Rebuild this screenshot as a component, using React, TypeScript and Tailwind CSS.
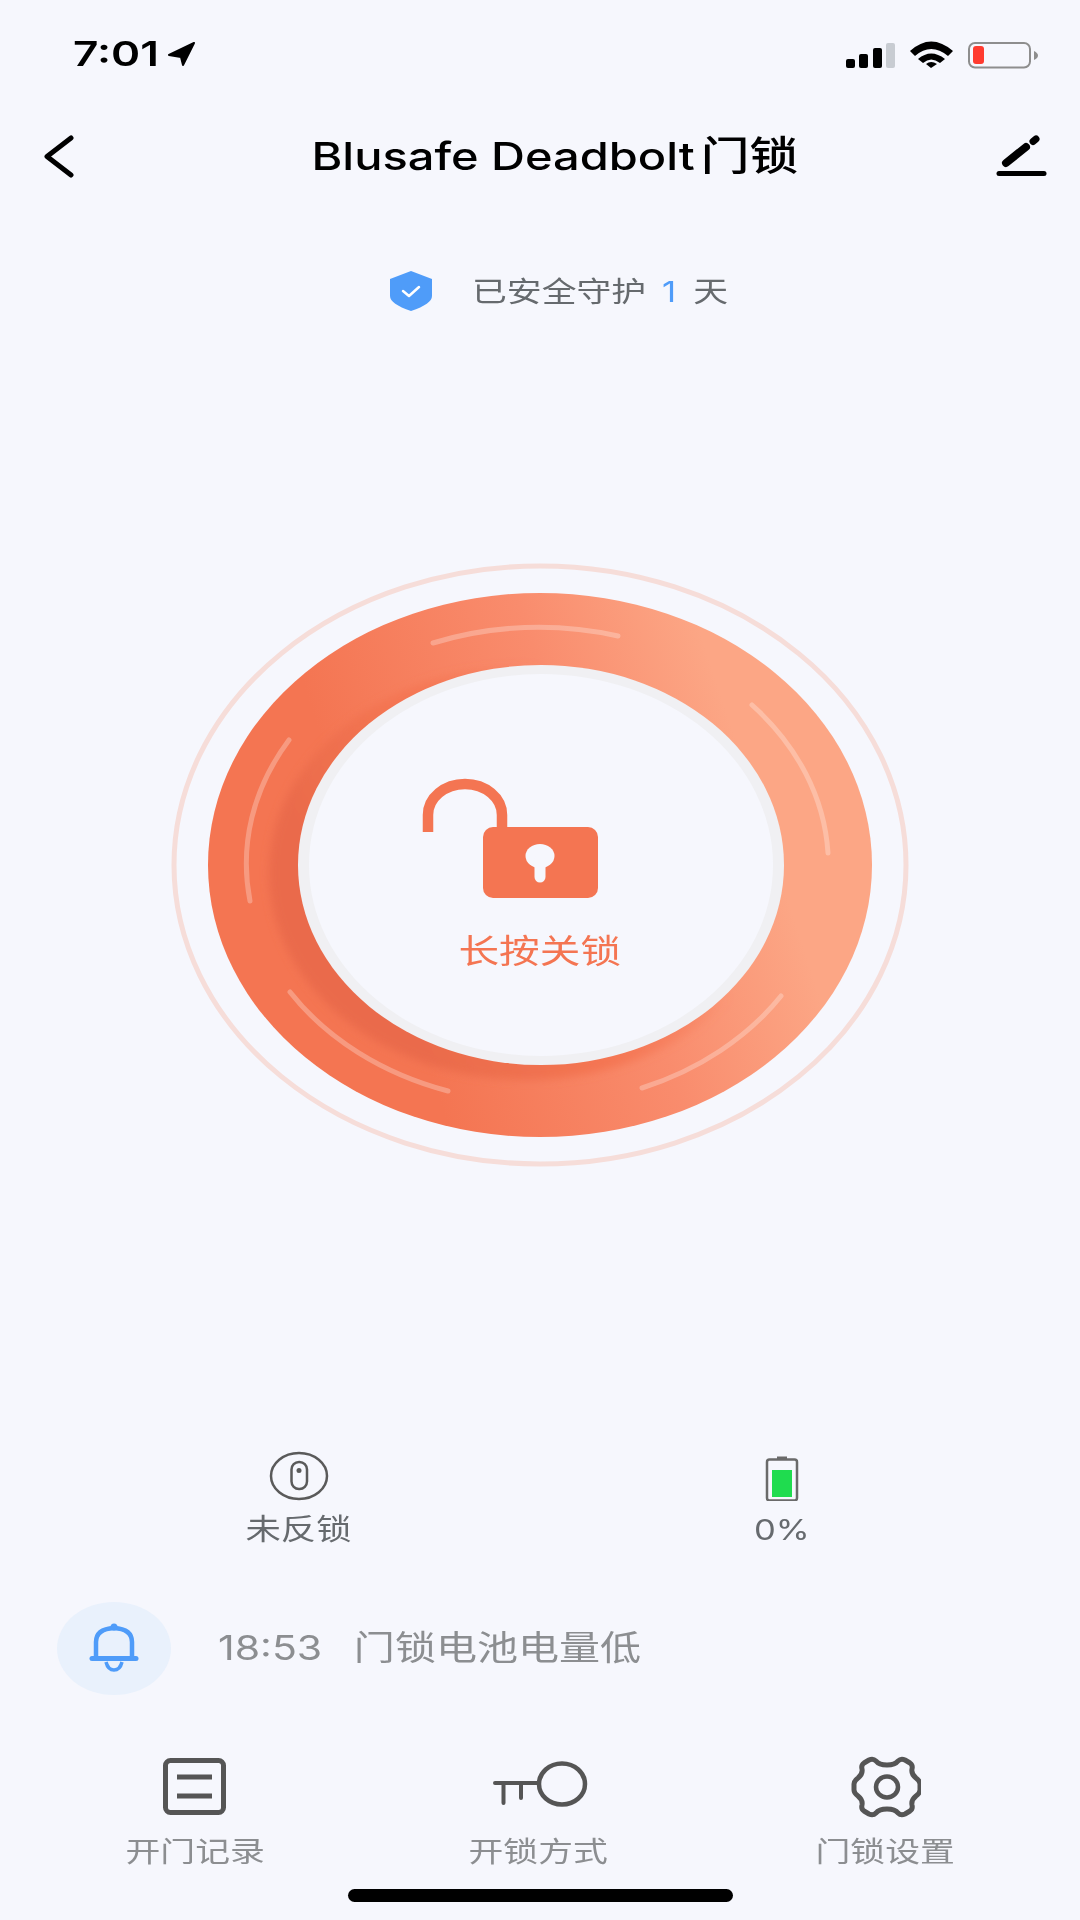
const font = { fontFamily: '"Inter", "Noto Sans CJK SC", sans-serif' }

function StatusBar() {
  return (
    <div className="relative flex h-[100px] items-start justify-between pl-[73px] pr-[41px] pt-[41px]">
      <div className="flex items-start">
        <span className="inline-block origin-left scale-x-[1.3] text-[34px] leading-[26px] font-semibold text-black">7:01</span>
        <svg viewBox="169 42 30 26" className="ml-[27px] h-[26px] w-[30px]">
          <path d="M197 44 L172 56 L184 58 L186 66 Z" fill="#000" stroke="#000" strokeWidth="2" strokeLinejoin="round" />
        </svg>
      </div>
      <svg viewBox="846 40 194 28" className="h-[28px] w-[194px]">
        <rect x="847" y="58" width="9" height="9" rx="2" fill="#000" />
        <rect x="860" y="53" width="9" height="14" rx="2" fill="#000" />
        <rect x="874" y="47" width="9" height="20" rx="2" fill="#000" />
        <rect x="887" y="42" width="9" height="25" rx="2" fill="#c8ccd2" />
        <path d="M911 50 Q932 31 954 50 L949 55 Q932 41 916 55 Z" fill="#000" />
        <path d="M919 58 Q932 47 946 58 L941 62 Q932 55 924 62 Z" fill="#000" />
        <path d="M927 63 Q932 59 938 63 L932 67 Z" fill="#000" />
        <rect x="970" y="42" width="61" height="24.5" rx="6" fill="none" stroke="#8e8e8e" strokeWidth="2" />
        <rect x="974" y="45" width="11" height="18" rx="3" fill="#ff3b30" />
        <path d="M1035 50 Q1039 52 1039 54.5 Q1039 57 1035 59 Z" fill="#8e8e8e" />
      </svg>
    </div>
  )
}

function Header() {
  return (
    <div className="flex h-[112px] items-center justify-between pl-[44px] pr-[32px]">
      <svg viewBox="44 134 30 44" className="h-[44px] w-[30px]">
        <path d="M71 138 L47 156.5 L71 175" fill="none" stroke="#000" strokeWidth="5" strokeLinecap="round" strokeLinejoin="round" />
      </svg>
      <span className="ml-[40px] inline-block scale-x-[1.218] text-[38.6px] leading-[44px] font-medium whitespace-nowrap text-black">
        Blusafe Deadbolt<span className="ml-[5px] text-[40px]">门锁</span>
      </span>
      <svg viewBox="996 134 52 44" className="h-[44px] w-[52px]">
        <path d="M1006 163 L1026 147" stroke="#000" strokeWidth="8" strokeLinecap="round" />
        <path d="M1033 141.5 L1036 139" stroke="#000" strokeWidth="7" strokeLinecap="round" />
        <path d="M999 173.5 H1044" stroke="#000" strokeWidth="5" strokeLinecap="round" />
      </svg>
    </div>
  )
}

function SafeDays() {
  return (
    <div className="flex h-[158px] items-center pl-[390px]">
      <svg viewBox="390 272 42 40" className="h-[40px] w-[42px]">
        <path d="M411 272 L432 280 V297 Q432 305 411 312 Q390 305 390 297 V280 Z" fill="#4f9cf9" />
        <path d="M403 292 L409 297 L419 288" fill="none" stroke="#fff" strokeWidth="2.5" strokeLinecap="round" strokeLinejoin="round" />
      </svg>
      <span className="mt-[2px] ml-[40px] inline-block origin-left scale-x-[1.218] text-[28.6px] leading-[34px] whitespace-pre text-[#666a6e]">
        已安全守护 <span className="mr-[6px] ml-[5px] text-[#4f9cf9]">1</span> 天
      </span>
    </div>
  )
}

function LockRing() {
  return (
    <div className="relative flex h-[990px] items-center justify-center">
      <svg viewBox="170 560 740 610" className="h-[610px] w-[740px]">
        <defs>
          <linearGradient id="ring" gradientUnits="userSpaceOnUse" x1="280" y1="930" x2="800" y2="760">
            <stop offset="0.18" stopColor="#f47552" />
            <stop offset="0.6" stopColor="#f98c6d" />
            <stop offset="0.9" stopColor="#fca685" />
          </linearGradient>
          <linearGradient id="ringShadow" gradientUnits="userSpaceOnUse" x1="300" y1="980" x2="620" y2="800">
            <stop offset="0.2" stopColor="#ea6b4b" />
            <stop offset="0.6" stopColor="#f47552" />
            <stop offset="1" stopColor="#f47552" stopOpacity="0" />
          </linearGradient>
          <filter id="soft" x="-10%" y="-10%" width="120%" height="120%">
            <feGaussianBlur stdDeviation="4" />
          </filter>
        </defs>
        <ellipse cx="540" cy="865" rx="366" ry="299" fill="none" stroke="#f6ddd9" strokeWidth="5" />
        <ellipse cx="540" cy="865" rx="332" ry="272" fill="url(#ring)" />
        <ellipse cx="526" cy="873" rx="257" ry="207" fill="url(#ringShadow)" filter="url(#soft)" />
        <ellipse cx="541" cy="865" rx="243" ry="200" fill="#f0f0f3" />
        <ellipse cx="541" cy="865" rx="232" ry="191" fill="#f6f7fd" />
        <g fill="none" stroke="#fff" strokeOpacity="0.27" strokeWidth="5" strokeLinecap="round">
          <path d="M433 643 A296 239 0 0 1 618 636" />
          <path d="M752 705 A296 239 0 0 1 828 853" />
          <path d="M781 996 A296 239 0 0 1 642 1088" />
          <path d="M448 1091 A296 239 0 0 1 290 992" />
          <path d="M250 901 A296 239 0 0 1 289 740" />
        </g>
        <path d="M428 832 V815 A37 31 0 0 1 502 815 V830" fill="none" stroke="#f47552" strokeWidth="10.5" />
        <rect x="483" y="827" width="115" height="71" rx="10" fill="#f47552" />
        <ellipse cx="540" cy="856" rx="14.5" ry="12" fill="#f6f7fd" />
        <path d="M540 860 V877" stroke="#f6f7fd" strokeWidth="11" strokeLinecap="round" />
      </svg>
      <span className="absolute top-[561px] left-0 w-full text-center">
        <span className="inline-block scale-x-[1.218] text-[33.4px] leading-[40px] text-[#f47552]">长按关锁</span>
      </span>
    </div>
  )
}

function DeviceStatus() {
  return (
    <div className="grid h-[220px] grid-cols-2 px-[57px] pt-[91px]">
      <div className="flex flex-col items-center">
        <svg viewBox="268 1450 60 50" className="h-[50px] w-[60px]">
          <ellipse cx="298" cy="1475" rx="28" ry="23" fill="none" stroke="#5a5a5a" strokeWidth="2.5" />
          <rect x="290.5" y="1461" width="15.5" height="27" rx="7.5" fill="none" stroke="#5a5a5a" strokeWidth="2.5" />
          <ellipse cx="298" cy="1469.5" rx="2.5" ry="2.5" fill="#5a5a5a" />
        </svg>
        <span className="mt-[12px] inline-block scale-x-[1.218] text-[29px] leading-[34px] text-[#666a6e]">未反锁</span>
      </div>
      <div className="flex flex-col items-center">
        <svg viewBox="762 1450 40 50" className="h-[50px] w-[40px]">
          <rect x="767" y="1458.5" width="30" height="41" rx="2.5" fill="none" stroke="#6a6a6a" strokeWidth="2.5" />
          <rect x="777" y="1455.5" width="10" height="3.5" fill="#6a6a6a" />
          <rect x="772" y="1469" width="20" height="27" fill="#1fdc4f" />
        </svg>
        <span className="mt-[12px] inline-block scale-x-[1.218] text-[28.4px] leading-[34px] text-[#666a6e]">0%</span>
      </div>
    </div>
  )
}

function LastEvent() {
  return (
    <div className="flex h-[136px] items-center pl-[57px]">
      <div className="flex h-[93px] w-[114px] items-center justify-center rounded-[50%] bg-[#e9f1fc]">
        <svg viewBox="88 1622 52 52" className="h-[52px] w-[52px]">
          <path d="M96 1657 V1642 Q96 1629 114 1628 Q132 1629 132 1642 V1657" fill="none" stroke="#4f9cf9" strokeWidth="4.5" />
          <circle cx="114" cy="1627" r="3.5" fill="#4f9cf9" />
          <path d="M92 1658.5 H136" stroke="#4f9cf9" strokeWidth="5" strokeLinecap="round" />
          <path d="M106 1662 Q108 1670 114 1670 Q120 1670 122 1662" fill="none" stroke="#4f9cf9" strokeWidth="3.5" />
        </svg>
      </div>
      <span className="ml-[47px] inline-block origin-left scale-x-[1.218] text-[33.7px] leading-[40px] whitespace-pre text-[#8c8e91]">
        18:53<span className="ml-[26px]">门锁电池电量低</span>
      </span>
    </div>
  )
}

const iconColor = '#555555'

function TabBar() {
  return (
    <div className="flex flex-1 justify-between px-[95px] pt-[40px]">
      <div className="flex w-[200px] flex-col items-center">
        <svg viewBox="160 1756 70 62" className="h-[62px] w-[70px]">
          <rect x="165.5" y="1760.5" width="58" height="52" rx="5" fill="none" stroke={iconColor} strokeWidth="5" />
          <path d="M177 1777 H212 M177 1796 H212" stroke={iconColor} strokeWidth="5" />
        </svg>
        <span className="mt-[17px] inline-block scale-x-[1.218] text-[28.6px] leading-[34px] text-[#8c8e91]">开门记录</span>
      </div>
      <div className="flex w-[200px] flex-col items-center">
        <svg viewBox="488 1756 100 62" className="h-[62px] w-[100px]">
          <ellipse cx="562" cy="1784" rx="23" ry="20.5" fill="none" stroke={iconColor} strokeWidth="4.5" />
          <path d="M495 1783 H539 M503.5 1783 V1803 M521 1783 V1798" fill="none" stroke={iconColor} strokeWidth="4" strokeLinecap="round" />
        </svg>
        <span className="mt-[17px] inline-block scale-x-[1.218] text-[28.6px] leading-[34px] text-[#8c8e91]">开锁方式</span>
      </div>
      <div className="ml-[4px] flex w-[200px] flex-col items-center">
        <svg viewBox="849 1756 72 62" className="h-[62px] w-[72px]">
          <g transform="translate(887 1787)">
            <path
              d="M0 -22 Q8 -22 11 -26 Q14 -29 18 -27 L23 -24 Q26 -22 25 -18 Q24 -13 29 -9 Q33 -6 33 -3 V3 Q33 6 29 9 Q24 13 25 18 Q26 22 23 24 L18 27 Q14 29 11 26 Q8 22 0 22 Q-8 22 -11 26 Q-14 29 -18 27 L-23 24 Q-26 22 -25 18 Q-24 13 -29 9 Q-33 6 -33 3 V-3 Q-33 -6 -29 -9 Q-24 -13 -25 -18 Q-26 -22 -23 -24 L-18 -27 Q-14 -29 -11 -26 Q-8 -22 0 -22 Z"
              fill="none"
              stroke={iconColor}
              strokeWidth="5"
              strokeLinejoin="round"
            />
            <ellipse cx="0" cy="0" rx="11" ry="10.5" fill="none" stroke={iconColor} strokeWidth="4.5" />
          </g>
        </svg>
        <span className="mt-[17px] inline-block scale-x-[1.218] text-[28.6px] leading-[34px] text-[#8c8e91]">门锁设置</span>
      </div>
    </div>
  )
}

export default function App() {
  return (
    <div className="relative flex h-[1920px] w-[1080px] flex-col overflow-hidden bg-[#f6f7fd]" style={font}>
      <StatusBar />
      <Header />
      <SafeDays />
      <LockRing />
      <DeviceStatus />
      <LastEvent />
      <TabBar />
      <div className="absolute bottom-[18px] left-[348px] h-[13px] w-[385px] rounded-full bg-black" />
    </div>
  )
}
